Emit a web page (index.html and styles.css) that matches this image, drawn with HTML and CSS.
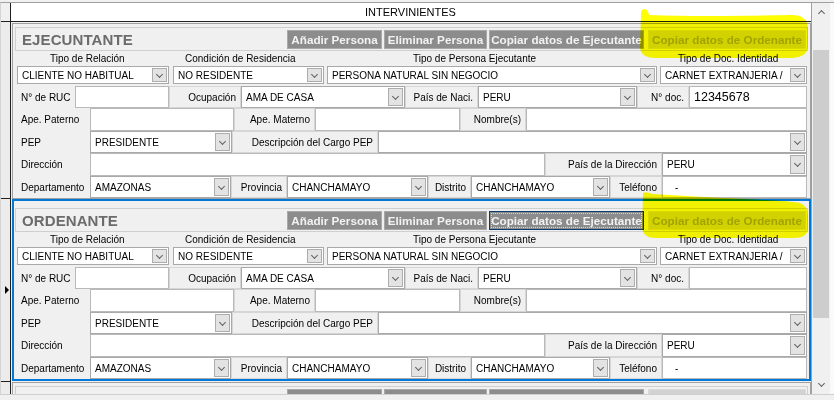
FILE: index.html
```html
<!DOCTYPE html>
<html lang="es">
<head>
<meta charset="utf-8">
<title>Intervinientes</title>
<link rel="stylesheet" href="styles.css">
</head>
<body>
<div class="app">
  <div class="frame">
    <div class="rowheads">
      <div class="rh rh-corner"></div>
      <div class="rh rh-1"></div>
      <div class="rh rh-2"><span class="cur"></span></div>
      <div class="rh rh-3"></div>
    </div>
    <div class="grid">
      <div class="colhead">INTERVINIENTES</div>
      <div class="viewport">

        <section class="sec s1">
          <div class="tbar">
            <span class="ttl">EJECUNTANTE</span>
            <div class="btns">
              <span class="btn b1">Añadir Persona</span>
              <span class="btn b2">Eliminar Persona</span>
              <span class="btn b3">Copiar datos de Ejecutante</span>
              <span class="btn b4 off">Copiar datos de Ordenante</span>
            </div>
          </div>
          <div class="fields">
            <div class="row hdr">
              <span class="h c1 hp1">Tipo de Relación</span>
              <span class="h c2 hp2">Condición de Residencia</span>
              <span class="h c3 hp3">Tipo de Persona Ejecutante</span>
              <span class="h c4 hp4">Tipo de Doc. Identidad</span>
            </div>
            <div class="row r1">
              <div class="sel c1"><span class="v">CLIENTE NO HABITUAL</span><span class="dd"></span></div>
              <div class="sel c2"><span class="v">NO RESIDENTE</span><span class="dd"></span></div>
              <div class="sel c3"><span class="v">PERSONA NATURAL SIN NEGOCIO</span><span class="dd"></span></div>
              <div class="sel c4"><span class="v">CARNET EXTRANJERIA /</span><span class="dd"></span></div>
            </div>
            <div class="row fr h22">
              <span class="lbl first w58">N° de RUC</span>
              <div class="inp w94"></div>
              <span class="lbl w72">Ocupación</span>
              <div class="sel w164"><span class="v">AMA DE CASA</span><span class="dd"></span></div>
              <span class="lbl w73">País de Naci.</span>
              <div class="sel w159"><span class="v">PERU</span><span class="dd"></span></div>
              <span class="lbl w52">N° doc.</span>
              <div class="inp w118 big">12345678</div>
            </div>
            <div class="row fr h23">
              <span class="lbl first w73">Ape. Paterno</span>
              <div class="inp w144"></div>
              <span class="lbl w81">Ape. Materno</span>
              <div class="inp w145"></div>
              <span class="lbl w66">Nombre(s)</span>
              <div class="inp w281"></div>
            </div>
            <div class="row fr h22">
              <span class="lbl first w73">PEP</span>
              <div class="sel w142"><span class="v">PRESIDENTE</span><span class="dd"></span></div>
              <span class="lbl w146">Descripción del Cargo PEP</span>
              <div class="sel w429"><span class="v"></span><span class="dd"></span></div>
            </div>
            <div class="row fr h23">
              <span class="lbl first w73">Dirección</span>
              <div class="inp w455"></div>
              <span class="lbl w117">País de la Dirección</span>
              <div class="sel w145"><span class="v">PERU</span><span class="dd"></span></div>
            </div>
            <div class="row fr h22">
              <span class="lbl first w73">Departamento</span>
              <div class="sel w141"><span class="v">AMAZONAS</span><span class="dd"></span></div>
              <span class="lbl w56">Provincia</span>
              <div class="sel w141"><span class="v">CHANCHAMAYO</span><span class="dd"></span></div>
              <span class="lbl w43">Distrito</span>
              <div class="sel w139"><span class="v">CHANCHAMAYO</span><span class="dd"></span></div>
              <span class="lbl w52">Teléfono</span>
              <div class="inp w145 tel">-</div>
            </div>
          </div>
        </section>

        <section class="sec s2 focus">
          <div class="tbar">
            <span class="ttl">ORDENANTE</span>
            <div class="btns">
              <span class="btn b1">Añadir Persona</span>
              <span class="btn b2">Eliminar Persona</span>
              <span class="btn b3 focused">Copiar datos de Ejecutante</span>
              <span class="btn b4 off">Copiar datos de Ordenante</span>
            </div>
          </div>
          <div class="fields">
            <div class="row hdr">
              <span class="h c1 hp1">Tipo de Relación</span>
              <span class="h c2 hp2">Condición de Residencia</span>
              <span class="h c3 hp3">Tipo de Persona Ejecutante</span>
              <span class="h c4 hp4">Tipo de Doc. Identidad</span>
            </div>
            <div class="row r1">
              <div class="sel c1"><span class="v">CLIENTE NO HABITUAL</span><span class="dd"></span></div>
              <div class="sel c2"><span class="v">NO RESIDENTE</span><span class="dd"></span></div>
              <div class="sel c3"><span class="v">PERSONA NATURAL SIN NEGOCIO</span><span class="dd"></span></div>
              <div class="sel c4"><span class="v">CARNET EXTRANJERIA /</span><span class="dd"></span></div>
            </div>
            <div class="row fr h22">
              <span class="lbl first w58">N° de RUC</span>
              <div class="inp w94"></div>
              <span class="lbl w72">Ocupación</span>
              <div class="sel w164"><span class="v">AMA DE CASA</span><span class="dd"></span></div>
              <span class="lbl w73">País de Naci.</span>
              <div class="sel w159"><span class="v">PERU</span><span class="dd"></span></div>
              <span class="lbl w52">N° doc.</span>
              <div class="inp w118 big"></div>
            </div>
            <div class="row fr h23">
              <span class="lbl first w73">Ape. Paterno</span>
              <div class="inp w144"></div>
              <span class="lbl w81">Ape. Materno</span>
              <div class="inp w145"></div>
              <span class="lbl w66">Nombre(s)</span>
              <div class="inp w281"></div>
            </div>
            <div class="row fr h22">
              <span class="lbl first w73">PEP</span>
              <div class="sel w142"><span class="v">PRESIDENTE</span><span class="dd"></span></div>
              <span class="lbl w146">Descripción del Cargo PEP</span>
              <div class="sel w429"><span class="v"></span><span class="dd"></span></div>
            </div>
            <div class="row fr h23">
              <span class="lbl first w73">Dirección</span>
              <div class="inp w455"></div>
              <span class="lbl w117">País de la Dirección</span>
              <div class="sel w145"><span class="v">PERU</span><span class="dd"></span></div>
            </div>
            <div class="row fr h22">
              <span class="lbl first w73">Departamento</span>
              <div class="sel w141"><span class="v">AMAZONAS</span><span class="dd"></span></div>
              <span class="lbl w56">Provincia</span>
              <div class="sel w141"><span class="v">CHANCHAMAYO</span><span class="dd"></span></div>
              <span class="lbl w43">Distrito</span>
              <div class="sel w139"><span class="v">CHANCHAMAYO</span><span class="dd"></span></div>
              <span class="lbl w52">Teléfono</span>
              <div class="inp w145 tel">-</div>
            </div>
          </div>
        </section>

        <section class="sec s3">
          <div class="tbar">
            <span class="ttl">BENEFICIARIO</span>
            <div class="btns">
              <span class="btn b1">Añadir Persona</span>
              <span class="btn b2">Eliminar Persona</span>
              <span class="btn b3">Copiar datos de Ejecutante</span>
              <span class="btn b4 off">Copiar datos de Ordenante</span>
            </div>
          </div>
        </section>

      </div>
    </div>
    <div class="vscroll">
      <div class="sb-arrow up"><span class="chev"></span></div>
      <div class="sb-track"><div class="sb-thumb"></div></div>
      <div class="sb-arrow down"><span class="chev"></span></div>
    </div>
    <div class="edge"></div>
  </div>
  <div class="bottomband"></div>

  <svg class="marker" width="834" height="400" viewBox="0 0 834 400" aria-hidden="true">
    <path d="M641,13 Q641,9 645,9 Q648,10 649,15 Q700,17 792,15 Q807,15 808,28 L808,47 Q807,57 792,58 L656,58 Q641,58 640,48 Z" fill="#ffff00"/>
    <path d="M643,193 Q646,191 652,194 Q700,197 745,199 Q790,201 800,203 Q808,206 808,216 L808,229 Q807,238 794,238 L656,238 Q643,238 642,228 Z" fill="#ffff00"/>
  </svg>
</div>
</body>
</html>
```

FILE: styles.css
```css
* { box-sizing: border-box; }

html, body {
  margin: 0;
  padding: 0;
  background: #f0f0f0;
}

body {
  font-family: "Liberation Sans", Arial, sans-serif;
  font-size: 10px;
  color: #000;
}

.app {
  position: relative;
  width: 834px;
  height: 400px;
  overflow: hidden;
  background: #f0f0f0;
  padding-top: 2px;
}

.frame {
  display: flex;
  height: 392px;
  border-top: 1px solid #a0a0a0;
  border-left: 1px solid #d4d4d4;
}

/* row headers */
.rowheads {
  width: 10px;
  display: flex;
  flex-direction: column;
  background: #ececec;
  border-right: 1px solid #202020;
}
.rh { border-bottom: 1px solid #202020; }
.rh-corner { height: 19px; background: #f0f0f0; }
.rh-1 { height: 177px; }
.rh-2 {
  height: 183px;
  display: flex;
  align-items: center;
  padding-left: 4px;
}
.rh-3 { flex: 1; border-bottom: none; }
.cur {
  width: 0;
  height: 0;
  border-left: 4px solid #000;
  border-top: 4px solid transparent;
  border-bottom: 4px solid transparent;
}

/* main grid */
.grid {
  width: 800px;
  display: flex;
  flex-direction: column;
}
.colhead {
  height: 19px;
  background: #fff;
  border-bottom: 1px solid #202020;
  text-align: center;
  font-size: 11px;
  line-height: 18px;
  padding-right: 1px;
}
.viewport {
  flex: 1;
  overflow: hidden;
  background: #f0f0f0;
}

/* sections */
.sec {
  width: 799px;
  margin-left: 1px;
  background: #f0f0f0;
  border: 1px solid #a0a0a0;
  padding: 3px 2px 0 2px;
}
.s1 { margin-top: 1px; height: 176px; }
.s2 { height: 182px; }
.s3 { margin-top: 1px; height: 182px; }
.sec.focus {
  border: 2px solid #0078d7;
  padding: 7px 1px 0 1px;
}

.tbar {
  height: 24px;
  border: 1px solid #cfcfcf;
  display: flex;
  align-items: center;
  padding: 0 1px 0 6px;
}
.ttl {
  font-size: 15px;
  font-weight: bold;
  color: #6b6b6b;
  letter-spacing: 0.1px;
}
.btns {
  margin-left: auto;
  display: flex;
  align-items: center;
  gap: 2px;
  padding-top: 1px;
}
.btn {
  height: 19px;
  background: #8c8c8c;
  color: #f2f2f2;
  border: 1px solid #a9a9a9;
  font-size: 11.7px;
  font-weight: bold;
  line-height: 17px;
  text-align: center;
  white-space: nowrap;
  overflow: hidden;
}
.b1 { width: 95px; }
.b2 { width: 103px; }
.b3 { width: 155px; }
.b4 { width: 158px; margin-left: 2px; }
.btn.off {
  background: #d2d2d2;
  color: #a2a2a2;
  border-color: #dadada;
}
.btn.focused {
  border-color: #0b3b73;
  outline: 1px dotted #d8d8d8;
  outline-offset: -3px;
}

/* fields */
.fields {
  width: 790px;
  margin-left: 2px;
}
.row {
  display: flex;
}
.hdr {
  height: 15px;
  align-items: center;
}
.hdr .h {
  white-space: nowrap;
}
.hp1 { padding-left: 33px; }
.hp2 { padding-left: 12px; }
.hp3 { padding-left: 86px; }
.hp4 { padding-left: 18px; }

.r1 {
  height: 18px;
  margin-bottom: 2px;
  gap: 3px;
}
.r1 .c1 { margin-right: 1px; }
.c1 { width: 152px; }
.c2 { width: 151px; }
.c3 { width: 330px; }
.c4 { width: 147px; }
.hdr .c1 { width: 156px; }
.hdr .c2 { width: 154px; }
.hdr .c3 { width: 333px; }

.h22 { height: 22px; }
.h23 { height: 23px; }

.sel {
  display: flex;
  align-items: center;
  background: #fff;
  border: 1px solid #a9a9a9;
  padding-left: 4px;
}
.sel .v {
  flex: 1;
  min-width: 0;
  overflow: hidden;
  white-space: nowrap;
}
.dd {
  width: 15px;
  align-self: stretch;
  margin: 1px;
  background: #e3e3e3;
  border: 1px solid #adadad;
  display: flex;
  align-items: center;
  justify-content: center;
}
.dd::after {
  content: "";
  width: 4px;
  height: 4px;
  border-right: 1px solid #606060;
  border-bottom: 1px solid #606060;
  transform: translateY(-1px) rotate(45deg);
}

.inp {
  display: flex;
  align-items: center;
  background: #fff;
  border: 1px solid #b9b9b9;
  padding-left: 4px;
}
.inp.big { font-size: 12.5px; }
.inp.tel { padding-left: 12px; }

.lbl {
  display: flex;
  align-items: center;
  justify-content: flex-end;
  padding-right: 4px;
  background: #f0f0f0;
  border: 1px solid #d6d6d6;
  white-space: nowrap;
}
.lbl.first {
  justify-content: flex-start;
  padding-left: 3px;
  padding-right: 0;
  border-color: transparent;
}

.w43 { width: 43px; }
.w52 { width: 52px; }
.w56 { width: 56px; }
.w58 { width: 58px; }
.w66 { width: 66px; }
.w72 { width: 72px; }
.w73 { width: 73px; }
.w81 { width: 81px; }
.w94 { width: 94px; }
.w117 { width: 117px; }
.w118 { width: 118px; }
.w139 { width: 139px; }
.w141 { width: 141px; }
.w142 { width: 142px; }
.w144 { width: 144px; }
.w145 { width: 145px; }
.w146 { width: 146px; }
.w159 { width: 159px; }
.w164 { width: 164px; }
.w281 { width: 281px; }
.w429 { width: 429px; }
.w455 { width: 455px; }

/* vertical scrollbar */
.vscroll {
  width: 19px;
  display: flex;
  flex-direction: column;
  background: #f0f0f0;
  border-left: 1px solid #a0a0a0;
}
.sb-arrow {
  height: 17px;
  display: flex;
  align-items: center;
  justify-content: center;
}
.chev {
  width: 5px;
  height: 5px;
  border-left: 1.5px solid #606060;
  border-top: 1.5px solid #606060;
}
.up .chev { transform: translateY(2px) rotate(45deg); }
.down .chev { transform: translateY(-2px) rotate(225deg); }
.sb-track {
  flex: 1;
  padding: 30px 1px 0 1px;
}
.sb-thumb {
  height: 268px;
  background: #cdcdcd;
}
.edge {
  flex: 1;
  background: #fafafa;
}

.bottomband {
  height: 6px;
  border-top: 1px solid #cfcfcf;
  background: #f0f0f0;
}

.marker {
  position: absolute;
  left: 0;
  top: 0;
  pointer-events: none;
  mix-blend-mode: multiply;
}
```
